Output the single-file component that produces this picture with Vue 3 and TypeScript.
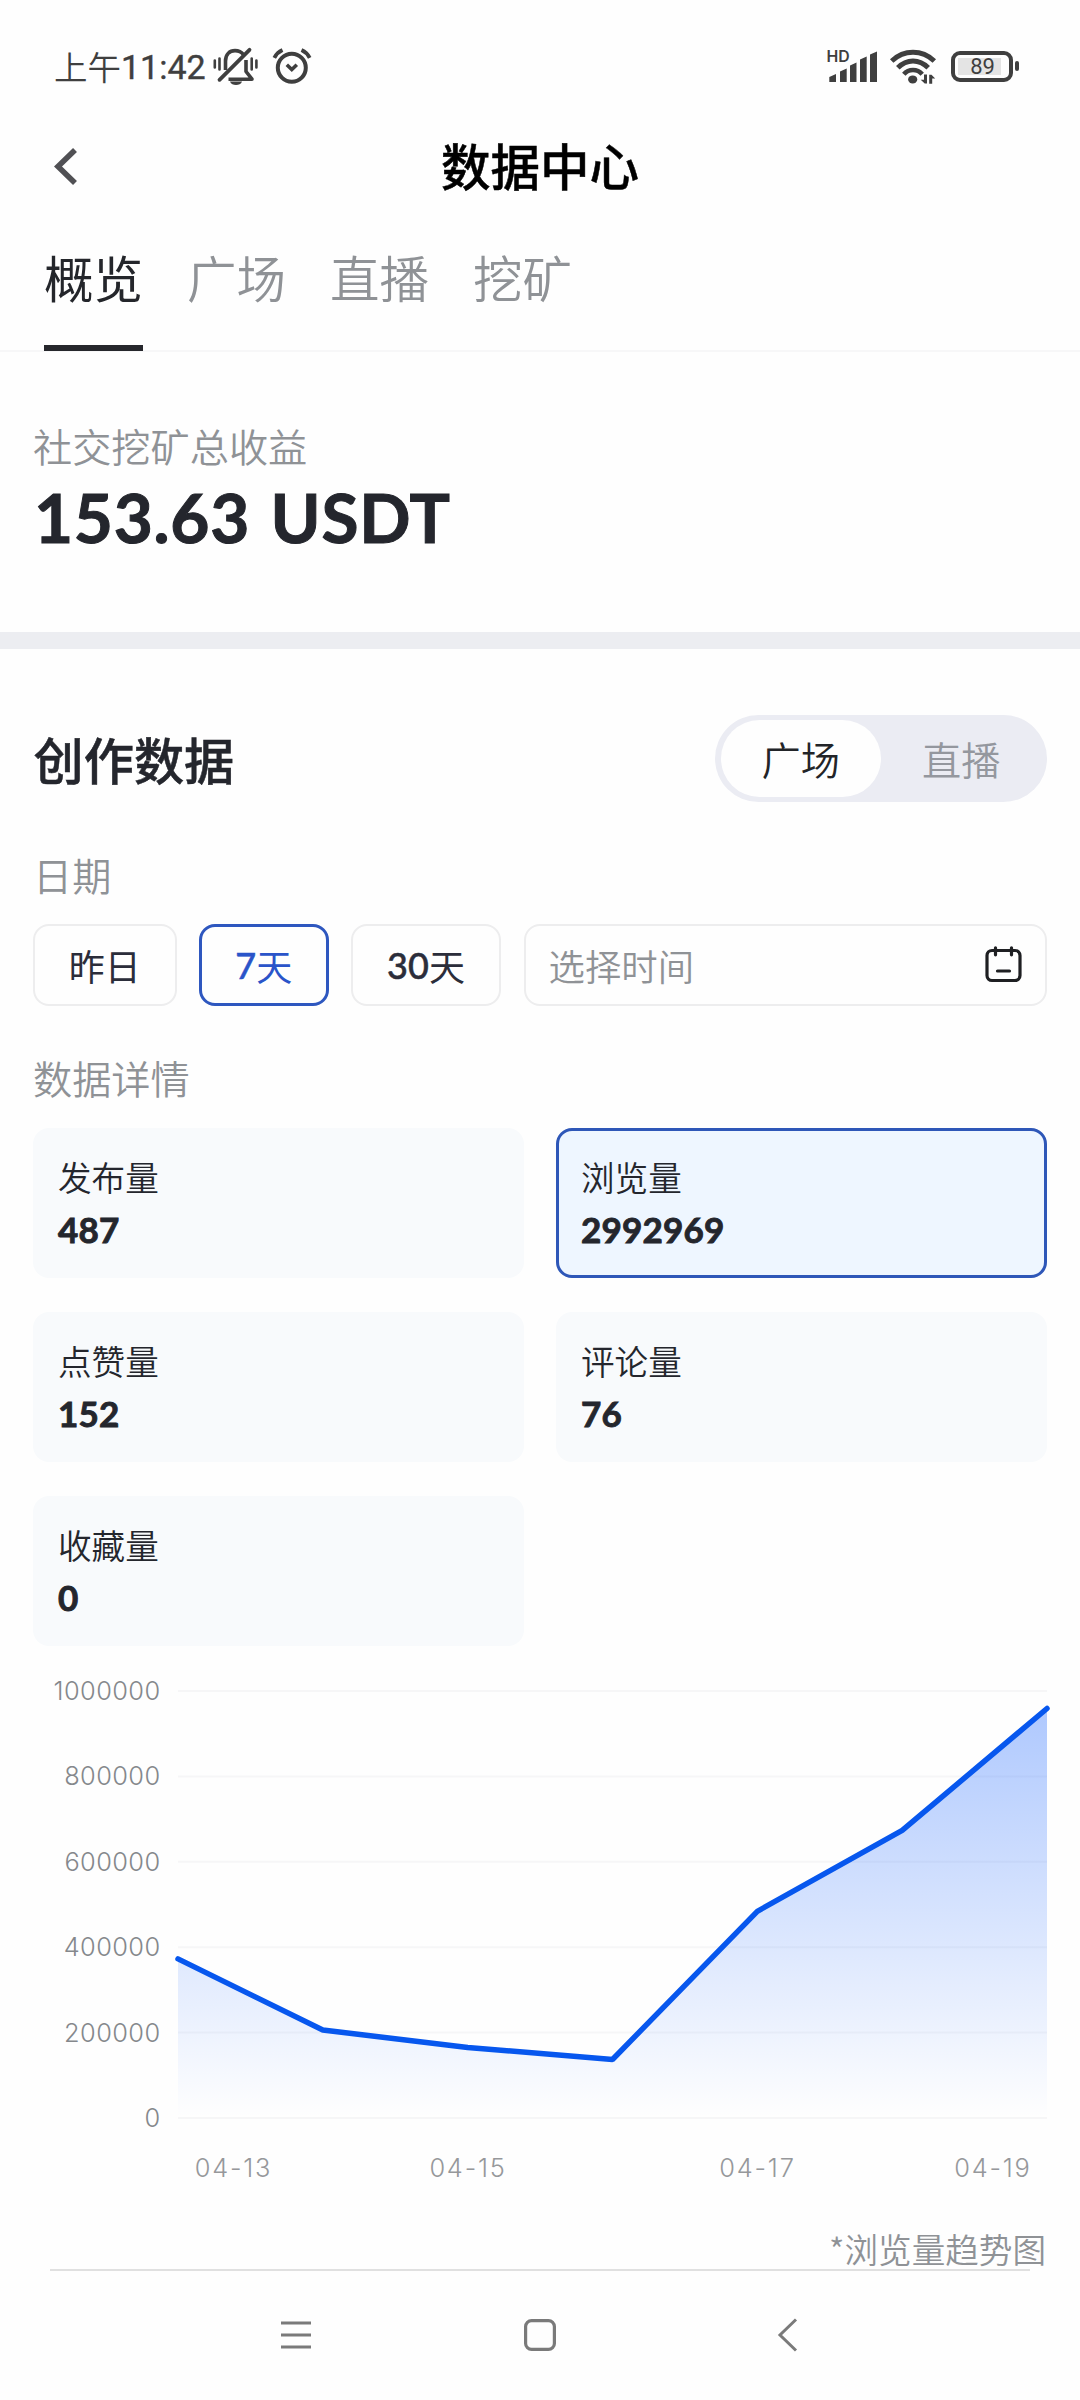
<script setup lang="ts">
import { computed, ref } from 'vue'

interface Metric {
  label: string
  value: string
}

const tabs = ['概览', '广场', '直播', '挖矿']
const activeTab = ref('概览')

const sources = ['广场', '直播']
const activeSource = ref('广场')

const ranges = [
  { num: '', text: '昨日' },
  { num: '7', text: '天' },
  { num: '30', text: '天' },
]
const activeRange = ref(1)

const metrics: Metric[] = [
  { label: '发布量', value: '487' },
  { label: '浏览量', value: '2992969' },
  { label: '点赞量', value: '152' },
  { label: '评论量', value: '76' },
  { label: '收藏量', value: '0' },
]
const activeMetric = ref('浏览量')

const plot = { left: 178, right: 1047, top: 31, bottom: 458, max: 1000000 }
const views = [372500, 206000, 165000, 137000, 484000, 673500, 959000]

const scaleX = (i: number) => plot.left + ((plot.right - plot.left) * i) / (views.length - 1)
const scaleY = (v: number) => plot.bottom - ((plot.bottom - plot.top) * v) / plot.max

const ticks = [1000000, 800000, 600000, 400000, 200000, 0]
const dates = [
  { text: '04-13', x: 233.5 },
  { text: '04-15', x: 468 },
  { text: '04-17', x: 757.5 },
  { text: '04-19', x: 993 },
]

const line = computed(() => views.map((v, i) => `${scaleX(i).toFixed(1)},${scaleY(v).toFixed(1)}`).join(' '))
const area = computed(() => `${plot.left},${plot.bottom} ${line.value} ${plot.right},${plot.bottom}`)
</script>

<template>
  <div class="screen">
    <div class="status">
      <div class="status-left">
        <span class="ampm">上午</span><span class="clock">11:42</span>
        <svg class="bell" width="46" height="38" viewBox="0 0 46 38" fill="none" stroke="#3f3f3f" stroke-width="3.6">
          <path d="M13.500 23V14C13.500 7.500 17.500 3.600 23 3.600c3.800 0 6.500 1.400 8.500 4" />
          <path d="M7.500 32.800L37.500 2.800" stroke-width="3.800" stroke-linecap="round" />
          <path d="M16.500 32.200H40L34 24.500V13" stroke-linejoin="round" />
          <path d="M18 34.500h12c-1 2.700-3.300 3.500-6 3.500s-5-.8-6-3.500z" fill="#3f3f3f" stroke="none" />
          <path d="M2.800 13.500v7M7.500 11.500v11M39.700 11.500v11M44.400 13.500v7" stroke-width="2.600" stroke-linecap="round" />
        </svg>
        <svg class="alarm" width="40" height="37" viewBox="0 0 40 37" fill="none" stroke="#3f3f3f">
          <circle cx="19.800" cy="19.700" r="14" stroke-width="4" />
          <path d="M14.800 16.800l5 4.700 5-4.700" stroke-width="3.600" />
          <path d="M2.300 9.800Q5 4.500 10.500 2M37.700 9.800Q35 4.500 29.500 2" stroke-width="3.800" />
        </svg>
      </div>
      <div class="status-right">
        <svg class="signal" width="52" height="34" viewBox="0 0 52 34" fill="#3f3f3f">
          <text x="0.500" y="13.200" font-size="15.800" font-weight="600" font-family="Inter, sans-serif">HD</text>
          <path d="M3.300 28l6.700-3v8H3.300zM14 22.500l6.700-3V33H14zM24 16.500l6.500-3V33H24zM34 10.500l6.700-3V33H34zM44 5.500l7-3V33h-7z" />
        </svg>
        <svg class="wifi" width="48" height="36" viewBox="0 0 48 36" fill="none" stroke="#3f3f3f" stroke-width="5">
          <path d="M2.700 13Q12 4.300 24 4.300T45.300 13" />
          <path d="M8.800 19.800Q15.500 13 24 13T39.200 19.800" />
          <path d="M14.800 26.200Q18.500 22 24 22T33.200 26.200" stroke-width="4.600" />
          <ellipse cx="23.700" cy="31.400" rx="4.600" ry="4" fill="#3f3f3f" stroke="none" />
          <path d="M38 26.500v9h-2.300l-4-3.800h3.300v-5.200zM40.200 35.700v-9h2.300l3.700 3.800h-3v5.200z" fill="#3f3f3f" stroke="none" />
        </svg>
        <div class="battery"><span>89</span></div>
        <i class="nub"></i>
      </div>
    </div>

    <header class="bar">
      <svg class="back" width="24" height="38" viewBox="0 0 24 38" fill="none" stroke="#505054" stroke-width="5.600">
        <path d="M21 2L4 18.500 21 35" />
      </svg>
      <h1>数据中心</h1>
    </header>

    <nav class="tabs">
      <button v-for="t in tabs" :key="t" :class="{ on: t === activeTab }" @click="activeTab = t">{{ t }}</button>
    </nav>

    <section class="income">
      <div class="caption">社交挖矿总收益</div>
      <div class="amount">153.63 USDT</div>
    </section>

    <main class="create">
      <div class="head">
        <h2>创作数据</h2>
        <div class="switch">
          <button v-for="s in sources" :key="s" :class="{ on: s === activeSource }" @click="activeSource = s">{{ s }}</button>
        </div>
      </div>

      <div class="caption date-label">日期</div>
      <div class="ranges">
        <button
          v-for="(r, i) in ranges"
          :key="i"
          class="range"
          :class="[`range-${i}`, { on: i === activeRange }]"
          @click="activeRange = i"
        ><b v-if="r.num">{{ r.num }}</b>{{ r.text }}</button>
        <div class="picker">
          <span>选择时间</span>
          <svg width="38" height="38" viewBox="0 0 38 38" fill="none" stroke="#1e1f22" stroke-width="3.200" stroke-linecap="round">
            <rect x="2" y="4.500" width="33" height="30" rx="5" />
            <path d="M10.500 1.800v7M26.500 1.800v7M12.500 25h12" />
          </svg>
        </div>
      </div>

      <div class="caption detail-label">数据详情</div>
      <div class="cards">
        <div
          v-for="m in metrics"
          :key="m.label"
          class="card"
          :class="{ on: m.label === activeMetric }"
          @click="activeMetric = m.label"
        >
          <div class="name">{{ m.label }}</div>
          <div class="value">{{ m.value }}</div>
        </div>
      </div>

      <svg class="chart" width="1080" height="534" viewBox="0 0 1080 534">
        <defs>
          <linearGradient id="fade" x1="0" y1="0" x2="0" y2="1">
            <stop offset="0" stop-color="#0757ff" stop-opacity="0.32" />
            <stop offset="1" stop-color="#0757ff" stop-opacity="0" />
          </linearGradient>
        </defs>
        <g v-for="t in ticks" :key="t">
          <line :x1="plot.left" :x2="plot.right" :y1="scaleY(t)" :y2="scaleY(t)" stroke="#f6f6f7" stroke-width="2" />
          <text class="tick" x="160.500" :y="scaleY(t) + 9" text-anchor="end">{{ t }}</text>
        </g>
        <polygon :points="area" fill="url(#fade)" />
        <polyline :points="line" fill="none" stroke="#0757ee" stroke-width="5.500" stroke-linecap="round" stroke-linejoin="bevel" />
        <text v-for="d in dates" :key="d.text" class="tick day" :x="d.x" y="516.500" text-anchor="middle">{{ d.text }}</text>
      </svg>

      <div class="note">*浏览量趋势图</div>
      <div class="rule"></div>
    </main>

    <footer class="sysnav">
      <svg width="32" height="34" viewBox="0 0 32 34" stroke="#7a7a7a" stroke-width="3">
        <path d="M1 5h30M1 17h30M1 29h30" />
      </svg>
      <svg class="home" width="34" height="34" viewBox="0 0 34 34" fill="none" stroke="#7a7a7a" stroke-width="3.200">
        <rect x="2.600" y="2.600" width="28.800" height="28.800" rx="6" />
      </svg>
      <svg class="prev" width="22" height="34" viewBox="0 0 22 34" fill="none" stroke="#7a7a7a" stroke-width="3">
        <path d="M19 1.500L3 17l16 15.500" />
      </svg>
    </footer>
  </div>
</template>

<style>
body {
  margin: 0;
  background: #fefefe;
}
</style>

<style scoped>
.screen {
  width: 1080px;
  height: 2400px;
  overflow: hidden;
  display: flex;
  flex-direction: column;
  background: #fefefe;
  color: #24262d;
  font-family: Lato, 'Noto Sans CJK SC', sans-serif;
  font-weight: 350;
}
button {
  border: 0;
  margin: 0;
  padding: 0;
  background: none;
  color: inherit;
  font: inherit;
}
h1,
h2 {
  margin: 0;
}
.status {
  height: 132px;
  flex: none;
  box-sizing: border-box;
  padding: 0 61px 0 54px;
  display: flex;
  justify-content: space-between;
  color: #3f3f3f;
}
.status-left,
.status-right {
  height: 132px;
  display: flex;
  align-items: center;
}
.ampm {
  width: 67px;
  font-family: 'Noto Sans CJK SC', sans-serif;
  font-size: 33.500px;
  line-height: 40px;
}
.clock {
  width: 83px;
  font: 400 34px/40px Roboto, sans-serif;
  margin-left: 0;
  margin-right: 1px;
  margin-top: 2px;
  -webkit-text-stroke: 0.400px currentColor;
}
.bell {
  margin-left: 7px;
}
.alarm {
  margin-left: 14px;
}
.signal {
  overflow: visible;
}
.wifi {
  margin-left: 11px;
}
.battery {
  box-sizing: border-box;
  width: 62px;
  height: 31px;
  margin-left: 14px;
  padding: 3px 8px 3px 3px;
  border: 4px solid #3f3f3f;
  border-radius: 9px;
  display: flex;
}
.battery span {
  flex: 1;
  padding-left: 6px;
  background: #e4e4e4;
  text-align: center;
  font: 400 22px/18px Roboto, sans-serif;
}
.nub {
  width: 4px;
  height: 10px;
  margin-left: 2px;
  border-radius: 2px;
  background: #3f3f3f;
}
.bar {
  height: 70px;
  flex: none;
  display: grid;
  grid-template-columns: 100px 1fr 100px;
  align-items: center;
}
.back {
  margin-left: 54px;
}
h1 {
  text-align: center;
  font-size: 49.500px;
  line-height: 70px;
  font-weight: 500;
  color: #000;
  -webkit-text-stroke: 0.500px currentColor;
}
.tabs {
  height: 150px;
  flex: none;
  box-sizing: border-box;
  padding-left: 44px;
  border-bottom: 2px solid #f7f7f8;
  display: flex;
  gap: 44px;
}
.tabs button {
  box-sizing: border-box;
  height: 149px;
  padding-top: 2px;
  font-size: 49.500px;
  line-height: 150px;
  color: #8f9296;
  border-bottom: 6px solid transparent;
}
.tabs .on {
  color: #24262b;
  font-weight: 400;
  border-color: #26272c;
}
.income {
  height: 297px;
  flex: none;
  box-sizing: border-box;
  padding: 70px 33px 0;
  border-bottom: 17px solid #ecedf1;
}
.caption {
  font-size: 39.200px;
  line-height: 50px;
  color: #8f9296;
}
.amount {
  font-size: 67.500px;
  line-height: 80px;
  font-weight: 700;
  margin-top: 5px;
  padding-left: 1px;
  letter-spacing: 0.700px;
  word-spacing: 3.500px;
  -webkit-text-stroke: 1px currentColor;
}
.create {
  display: flex;
  flex-direction: column;
}
.head {
  height: 87px;
  padding: 66px 33.500px 0;
  display: flex;
  justify-content: space-between;
  align-items: center;
}
h2 {
  padding-top: 5px;
  font-size: 50.200px;
  line-height: 80px;
  font-weight: 500;
  -webkit-text-stroke: 0.500px currentColor;
}
.switch {
  box-sizing: border-box;
  width: 332px;
  height: 87px;
  padding: 5px 5px 5px 6px;
  border-radius: 44px;
  background: #ebecf3;
  display: flex;
}
.switch button {
  flex: 1;
  border-radius: 40px;
  font-size: 39.200px;
  line-height: 79px;
  color: #94979e;
}
.switch .on {
  background: #fefefe;
  color: #222428;
}
.date-label {
  margin: 49px 33px 0;
}
.ranges {
  margin: 23px 33.500px 0 33px;
  height: 82px;
  display: flex;
  gap: 22.500px;
}
.range,
.picker {
  box-sizing: border-box;
  border: 2px solid #ededee;
  border-radius: 16px;
  display: flex;
  align-items: center;
  justify-content: center;
}
.range {
  font-size: 36px;
  font-weight: 400;
  color: #2b2d3a;
}
.range b {
  font-weight: 500;
  font-size: 36px;
  -webkit-text-stroke: 0.500px currentColor;
}
.range-0 {
  width: 143.500px;
}
.range-1 {
  width: 129.500px;
}
.range-2 {
  width: 150px;
}
.range.on {
  border: 3px solid #2e57bf;
  color: #2a54c9;
}
.picker {
  flex: 1;
  justify-content: space-between;
  padding: 0 22px 0 23px;
  font-size: 36.400px;
  color: #8f9296;
}
.detail-label {
  margin: 48px 33px 0;
}
.cards {
  margin: 24px 33px 0 33px;
  display: grid;
  grid-template-columns: 1fr 1fr;
  gap: 34px 32px;
}
.card {
  box-sizing: border-box;
  height: 150px;
  padding: 22px 22px 0;
  border: 3px solid transparent;
  border-radius: 16px;
  background: #f8fafc;
}
.card.on {
  background: #eef6ff;
  border-color: #2e57b8;
}
.name {
  font-size: 33.600px;
  line-height: 51px;
}
.value {
  font-size: 35px;
  line-height: 50px;
  font-weight: 700;
  letter-spacing: 0.200px;
  -webkit-text-stroke: 0.900px currentColor;
}
.chart {
  display: block;
  margin-top: 14px;
}
.tick {
  font: 300 25.400px Inter, sans-serif;
  letter-spacing: 0.400px;
  fill: #85888c;
}
.day {
  letter-spacing: 1.800px;
  fill: #96989b;
}
.note {
  margin: 33px 34px 0;
  text-align: right;
  font-family: 'Noto Sans CJK SC', sans-serif;
  font-size: 33.600px;
  line-height: 43px;
  height: 42px;
  color: #8f9296;
}
.rule {
  margin: 0 50px;
  height: 2px;
  background: #e0e0e0;
}
.sysnav {
  margin-top: 47px;
  padding-left: 280px;
  display: flex;
}
.home {
  margin-left: 211px;
}
.prev {
  margin-left: 220px;
}
</style>
